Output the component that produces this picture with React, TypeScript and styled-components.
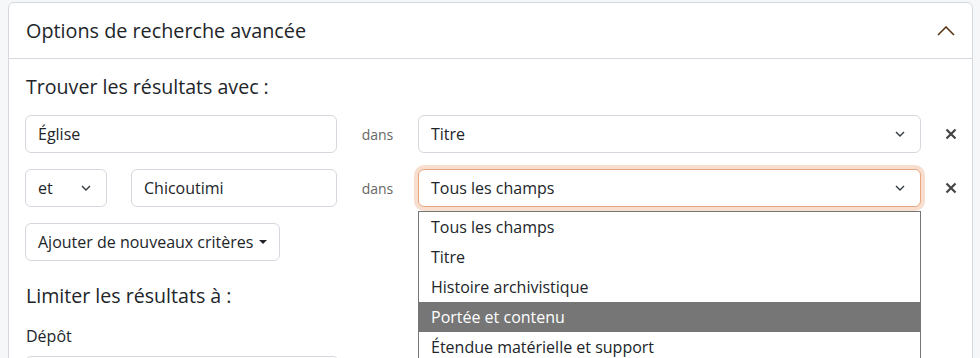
import * as React from 'react';
import {FC} from 'react';
import styled, {createGlobalStyle} from 'styled-components';

const GlobalStyle = createGlobalStyle`
    html, body {
        margin: 0;
        padding: 0;
        background: #f6f7f9;
        font-family: "Open Sans", "Liberation Sans", sans-serif;
        color: #212529;
    }
`;

const fieldOptions = [
    'Tous les champs',
    'Titre',
    'Histoire archivistique',
    'Portée et contenu',
    'Étendue matérielle et support',
];

const ChevronDown: FC = () => (
    <svg width="10" height="6" viewBox="0 0 10 6">
        <path d="M1 1l4 4 4-4" fill="none" stroke="#343a40" strokeWidth="1.4"/>
    </svg>
);

const ChevronUp: FC = () => (
    <svg width="18" height="10" viewBox="0 0 18 10">
        <path d="M1 9l8-8 8 8" fill="none" stroke="#5c3515" strokeWidth="1.6"/>
    </svg>
);

const CloseIcon: FC = () => (
    <svg width="12" height="12" viewBox="0 0 12 12">
        <path d="M1.5 1.5l9 9M10.5 1.5l-9 9" fill="none" stroke="#444" strokeWidth="2.2"/>
    </svg>
);

export const App: FC = () => {
    return <Page>
        <GlobalStyle/>
        <Card>
            <CardHeader>
                <span>Options de recherche avancée</span>
                <ChevronUp/>
            </CardHeader>
            <CardBody>
                <SectionLabel>Trouver les résultats avec :</SectionLabel>
                <CriteriaRow>
                    <TextField>Église</TextField>
                    <Dans>dans</Dans>
                    <SelectBox>
                        <span>Titre</span>
                        <ChevronDown/>
                    </SelectBox>
                    <RemoveButton><CloseIcon/></RemoveButton>
                </CriteriaRow>
                <CriteriaRow>
                    <QueryGroup>
                        <SelectBox>
                            <span>et</span>
                            <ChevronDown/>
                        </SelectBox>
                        <TextField>Chicoutimi</TextField>
                    </QueryGroup>
                    <Dans>dans</Dans>
                    <SelectWrap>
                        <SelectBox $focused>
                            <span>Tous les champs</span>
                            <ChevronDown/>
                        </SelectBox>
                        <OptionList>
                            {fieldOptions.map((opt, i) =>
                                <OptionItem key={opt} $active={i === 3}>{opt}</OptionItem>
                            )}
                        </OptionList>
                    </SelectWrap>
                    <RemoveButton><CloseIcon/></RemoveButton>
                </CriteriaRow>
                <AddButton>
                    Ajouter de nouveaux critères
                    <Caret/>
                </AddButton>
                <SectionLabel>Limiter les résultats à :</SectionLabel>
                <FieldLabel>Dépôt</FieldLabel>
                <RepoInput/>
            </CardBody>
        </Card>
    </Page>
}

export default App;


const Page = styled.div`
    padding: 2px 7px 0 8px;
    height: 358px;
    box-sizing: border-box;
    overflow: hidden;
`;

const Card = styled.div`
    background: #fff;
    border: 1px solid #d5d8de;
    border-radius: 6px;
    height: 400px;
`;

const CardHeader = styled.div`
    display: flex;
    align-items: center;
    justify-content: space-between;
    height: 55px;
    padding: 0 17px 0 17px;
    border-bottom: 1px solid #d5d8de;
    font-size: 19.8px;
    color: #212529;
`;

const CardBody = styled.div`
    padding: 14px 16px 0 16px;
`;

const SectionLabel = styled.div`
    font-size: 19.6px;
    line-height: 28px;
    margin: 0 0 14px 1px;
`;

const CriteriaRow = styled.div`
    display: grid;
    grid-template-columns: 312px 81px 503px 1fr;
    align-items: center;
    height: 38px;
    margin-bottom: 16px;
`;

const QueryGroup = styled.div`
    display: grid;
    grid-template-columns: 82px 206px;
    gap: 24px;
`;

const fieldBase = `
    box-sizing: border-box;
    height: 38px;
    border: 1px solid #d5d8de;
    border-radius: 6px;
    background: #fff;
    font-size: 16px;
    color: #212529;
    display: flex;
    align-items: center;
`;

const TextField = styled.div`
    ${fieldBase};
    padding: 0 12px;
`;

const Dans = styled.div`
    text-align: center;
    font-size: 14px;
    color: #666;
`;

const SelectWrap = styled.div`
    position: relative;
`;

const SelectBox = styled.div<{ $focused?: boolean }>`
    ${fieldBase};
    justify-content: space-between;
    padding: 0 15px 0 12px;
    border-color: ${p => p.$focused ? '#e7a67d' : '#d5d8de'};
    box-shadow: ${p => p.$focused ? '0 0 0 4px rgba(231, 160, 118, 0.35)' : 'none'};
`;

const OptionList = styled.div`
    position: absolute;
    top: 42px;
    left: 0;
    right: 0;
    background: #fff;
    border: 1px solid #767676;
    border-bottom: none;
    z-index: 2;
`;

const OptionItem = styled.div<{ $active?: boolean }>`
    height: 30px;
    line-height: 30px;
    padding-left: 12px;
    font-size: 16px;
    background: ${p => p.$active ? '#767676' : '#fff'};
    color: ${p => p.$active ? '#fff' : '#212529'};
`;

const RemoveButton = styled.div`
    justify-self: end;
    display: flex;
    align-items: center;
    margin-right: -1px;
`;

const AddButton = styled.div`
    display: inline-flex;
    align-items: center;
    gap: 4px;
    box-sizing: border-box;
    height: 38px;
    padding: 0 12px;
    border: 1px solid #d5d8de;
    border-radius: 6px;
    font-size: 16px;
    margin-bottom: 21px;
`;

const Caret = styled.span`
    width: 0;
    height: 0;
    border-left: 4px solid transparent;
    border-right: 4px solid transparent;
    border-top: 4px solid #212529;
    margin-left: 2px;
`;

const FieldLabel = styled.div`
    font-size: 16px;
    line-height: 24px;
    margin: 1px 0 8px 1px;
`;

const RepoInput = styled.div`
    height: 38px;
    border: 1px solid #d5d8de;
    border-radius: 6px;
    width: 312px;
`;
